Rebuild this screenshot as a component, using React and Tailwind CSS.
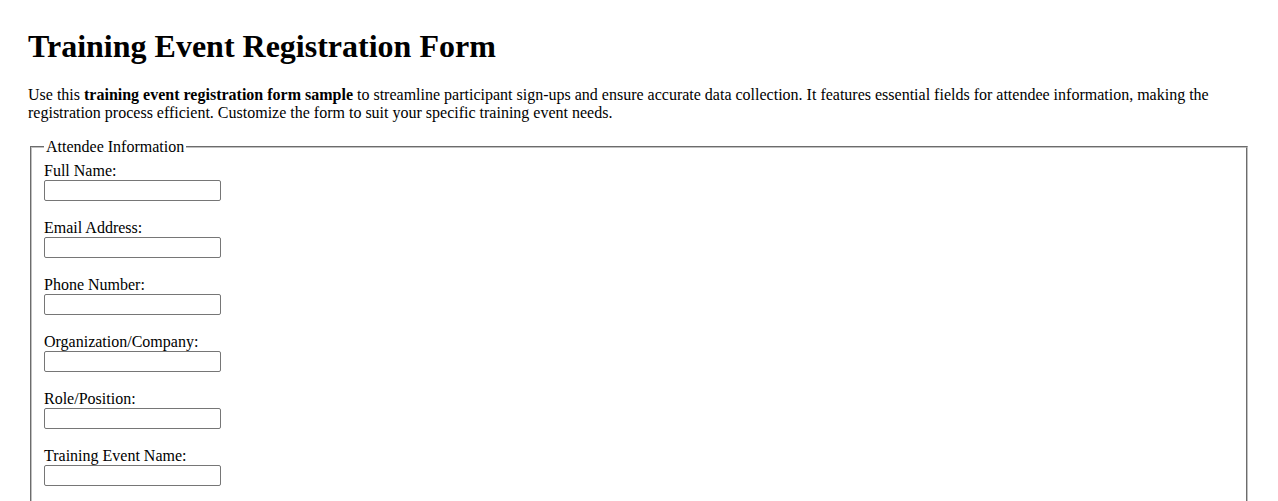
import React from 'react'

const fields = [
  { id: 'fullName', label: 'Full Name:', type: 'text' },
  { id: 'email', label: 'Email Address:', type: 'email' },
  { id: 'phone', label: 'Phone Number:', type: 'tel' },
  { id: 'organization', label: 'Organization/Company:', type: 'text' },
  { id: 'role', label: 'Role/Position:', type: 'text' },
  { id: 'eventName', label: 'Training Event Name:', type: 'text' },
  { id: 'eventDate', label: 'Training Event Date:', type: 'date' }
]

const App = () => {
  return (
    <div className="min-h-screen bg-white px-[28px] pt-[28px] pb-8 text-black font-['Liberation_Serif','Times_New_Roman',serif] text-[16px] leading-[normal]">
      <h1 className="m-0 mb-[21.44px] text-[32px] font-bold leading-[normal]">Training Event Registration Form</h1>

      <p className="mb-[16px]">
        Use this <strong className="font-bold">training event registration form sample</strong> to streamline participant
        sign-ups and ensure accurate data collection. It features essential fields for attendee information, making the
        registration process efficient. Customize the form to suit your specific training event needs.
      </p>

      <form>
        <fieldset className="mx-[2px] border-2 border-[#c0c0c0] [border-style:groove] px-[12px] pt-[5.6px] pb-[10px]">
          <legend className="px-[2px] leading-[normal]">Attendee Information</legend>
          {fields.map((field) => (
            <div key={field.id} className="mb-[18px]">
              <label htmlFor={field.id} className="block leading-[18px]">
                {field.label}
              </label>
              <input
                id={field.id}
                name={field.id}
                type="text"
                className="block h-[21px] w-[177px] rounded-[2px] border border-[#767676] bg-white px-[2px] text-[13.33px]"
              />
            </div>
          ))}
        </fieldset>
      </form>
    </div>
  )
}

export default App
